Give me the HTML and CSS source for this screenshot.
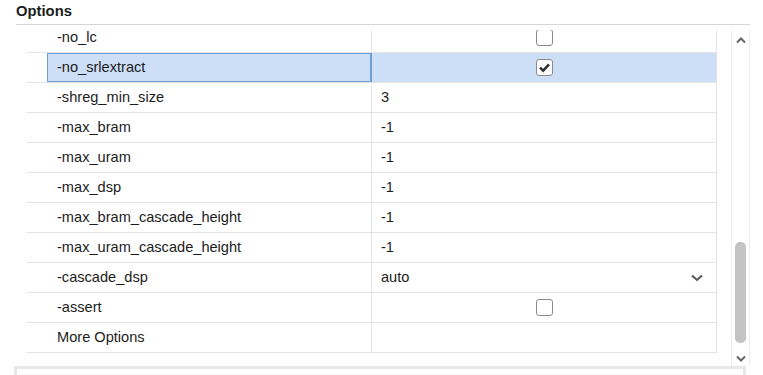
FILE: index.html
```html
<!DOCTYPE html>
<html lang="en">
<head>
    <meta charset="UTF-8">
    <meta name="viewport" content="width=device-width, initial-scale=1.0">
    <title>Options</title>
    <link rel="stylesheet" href="styles.css">
</head>
<body>
    <div class="section-title">Options</div>

    <div class="panel">
        <div class="table-view">
            <div class="rows">
                <div class="row">
                    <div class="indent"></div>
                    <div class="name">-no_lc</div>
                    <div class="value center"><span class="check"></span></div>
                </div>
                <div class="row selected">
                    <div class="indent"></div>
                    <div class="name">-no_srlextract</div>
                    <div class="value center">
                        <span class="check">
                            <svg width="13" height="13" viewBox="0 0 13 13"><path d="M2 6.6 L5.2 9.6 L11 3.4" fill="none" stroke="#333" stroke-width="2.6"/></svg>
                        </span>
                    </div>
                </div>
                <div class="row">
                    <div class="indent"></div>
                    <div class="name">-shreg_min_size</div>
                    <div class="value">3</div>
                </div>
                <div class="row">
                    <div class="indent"></div>
                    <div class="name">-max_bram</div>
                    <div class="value">-1</div>
                </div>
                <div class="row">
                    <div class="indent"></div>
                    <div class="name">-max_uram</div>
                    <div class="value">-1</div>
                </div>
                <div class="row">
                    <div class="indent"></div>
                    <div class="name">-max_dsp</div>
                    <div class="value">-1</div>
                </div>
                <div class="row">
                    <div class="indent"></div>
                    <div class="name">-max_bram_cascade_height</div>
                    <div class="value">-1</div>
                </div>
                <div class="row">
                    <div class="indent"></div>
                    <div class="name">-max_uram_cascade_height</div>
                    <div class="value">-1</div>
                </div>
                <div class="row">
                    <div class="indent"></div>
                    <div class="name">-cascade_dsp</div>
                    <div class="value dropdown">
                        <span>auto</span>
                        <svg width="12" height="8" viewBox="0 0 12 8"><polyline points="1,1.5 6,6 11,1.5" fill="none" stroke="#555" stroke-width="2"/></svg>
                    </div>
                </div>
                <div class="row">
                    <div class="indent"></div>
                    <div class="name">-assert</div>
                    <div class="value center"><span class="check"></span></div>
                </div>
                <div class="row">
                    <div class="indent"></div>
                    <div class="name">More Options</div>
                    <div class="value"></div>
                </div>
            </div>
        </div>

        <div class="scrollbar">
            <div class="arrow">
                <svg width="10" height="7" viewBox="0 0 10 7"><polyline points="1,5.5 5,1.5 9,5.5" fill="none" stroke="#666" stroke-width="2"/></svg>
            </div>
            <div class="track"></div>
            <div class="thumb"></div>
            <div class="arrow down">
                <svg width="10" height="7" viewBox="0 0 10 7"><polyline points="1,1.5 5,5.5 9,1.5" fill="none" stroke="#666" stroke-width="2"/></svg>
            </div>
        </div>
    </div>

    <div class="bottom-box"></div>
</body>
</html>
```

FILE: styles.css
```css
body {
    margin: 0;
    font-family: "Liberation Sans", Arial, sans-serif;
    font-size: 14.6px;
    color: #1c1c1c;
    background: #ffffff;
    height: 375px;
    overflow: hidden;
}

/* === Header === */
.section-title {
    margin: 0 13px 0 16px;
    height: 24px;
    line-height: 23px;
    font-size: 14.8px;
    font-weight: bold;
    border-bottom: 1px solid #d6d6d6;
}

/* === Panel === */
.panel {
    display: flex;
    margin-top: 5px;
    height: 336px;
}

.table-view {
    margin-left: 27px;
    width: 690px;
    overflow: hidden;
}

.rows {
    margin-top: -7px;
}

.row {
    display: flex;
    height: 29px;
    border-bottom: 1px solid #e3e3e3;
}

.indent {
    width: 20px;
    flex-shrink: 0;
}

.name {
    width: 314px;
    padding-left: 10px;
    line-height: 29px;
    border-right: 1px solid #e3e3e3;
    flex-shrink: 0;
}

.value {
    flex: 1;
    padding-left: 9px;
    line-height: 29px;
    border-right: 1px solid #e3e3e3;
}

.value.center {
    display: flex;
    align-items: center;
    justify-content: center;
    padding-left: 0;
}

.value.dropdown {
    display: flex;
    align-items: center;
    justify-content: space-between;
    padding-right: 13px;
}

.row.selected .name,
.row.selected .value {
    background: #cddff7;
}

.row.selected .name {
    box-shadow: inset 0 0 0 1px #6e9fd4;
    border-right-color: #6e9fd4;
}

.check {
    width: 15px;
    height: 15px;
    border: 1.5px solid #8a8a8a;
    border-radius: 3px;
    background: #fff;
    display: flex;
    align-items: center;
    justify-content: center;
}

/* === Scrollbar === */
.scrollbar {
    margin-left: 14px;
    width: 17px;
    border-left: 1px solid #ececec;
    border-right: 1px solid #ececec;
    display: flex;
    flex-direction: column;
    align-items: center;
}

.arrow {
    height: 14px;
    display: flex;
    align-items: flex-end;
    justify-content: center;
}

.arrow.down {
    height: 16px;
    align-items: center;
    margin-top: 7px;
}

.track {
    flex: 1;
}

.thumb {
    width: 11px;
    height: 101px;
    border-radius: 5px;
    background: #c3c3c3;
}

/* === Bottom box === */
.bottom-box {
    margin: 0 17px 0 14px;
    height: 20px;
    border: 3px solid #e8e8e8;
    border-bottom: none;
}
```
